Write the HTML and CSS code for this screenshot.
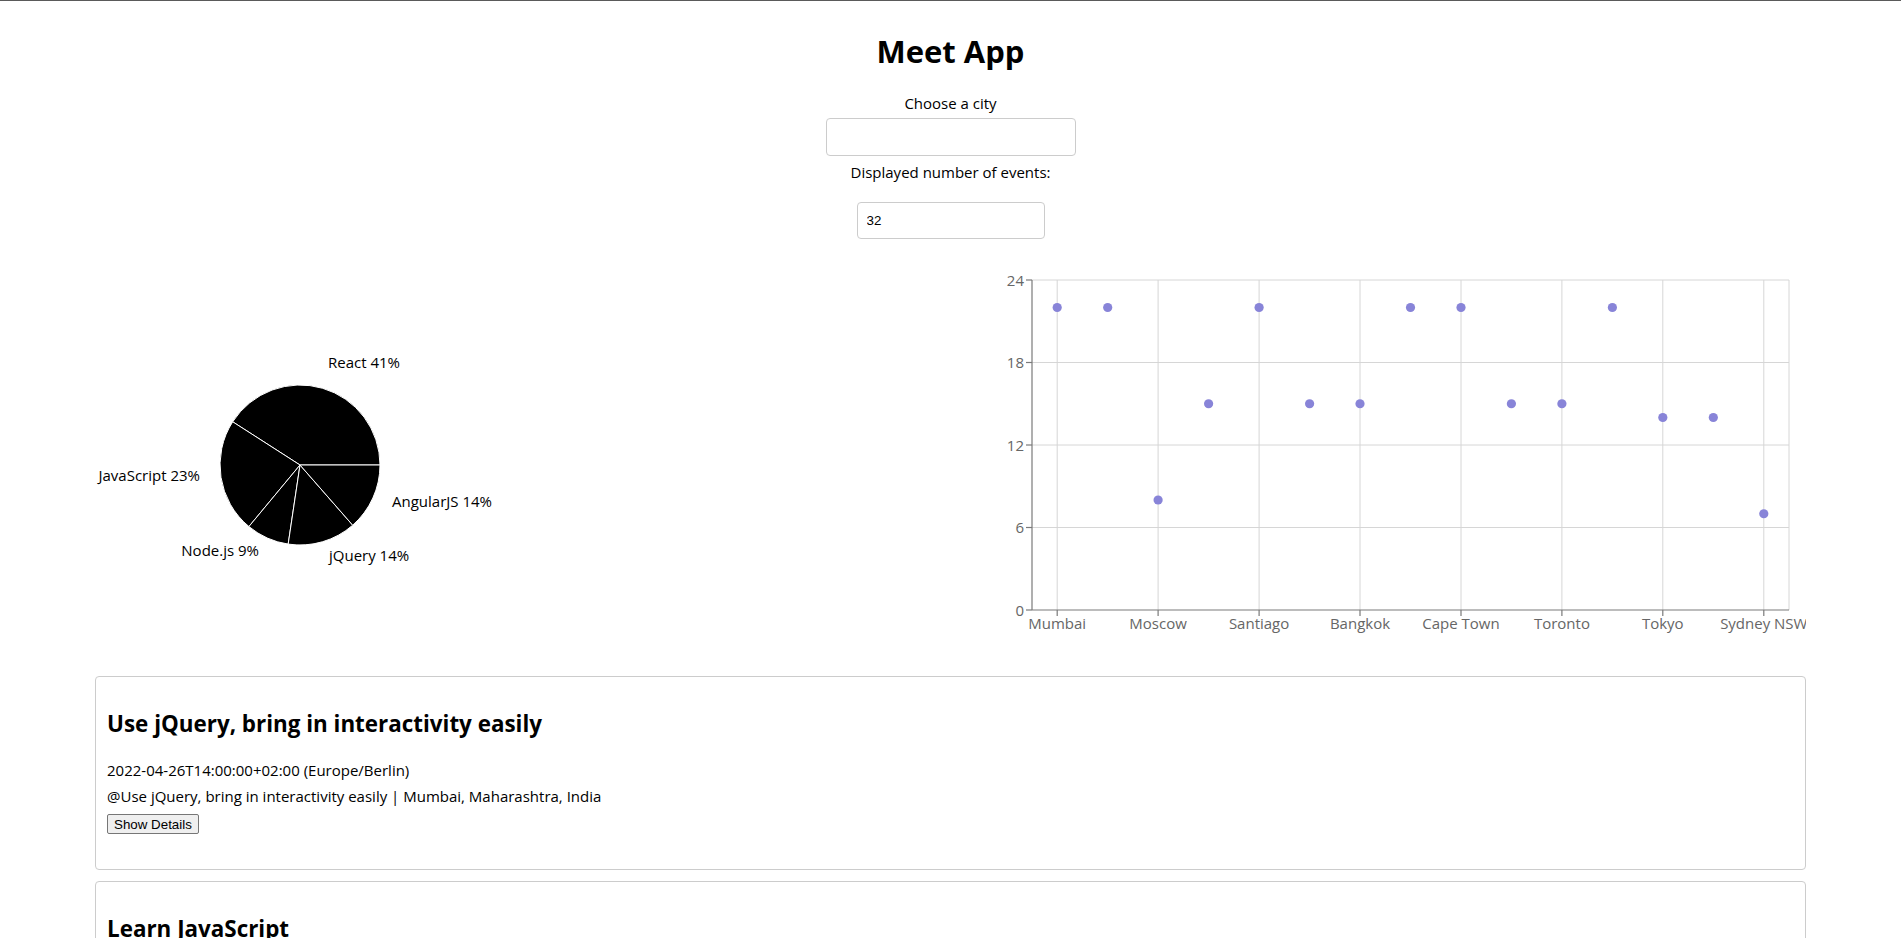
FILE: index.html
```html
<!DOCTYPE html>
<html lang="en">
<head>
<meta charset="utf-8">
<title>Meet App</title>
<link rel="stylesheet" href="styles.css">
</head>
<body>
<div class="app">
  <h1 class="app-title">Meet App</h1>
  <div class="city-search">
    <label class="field-label" for="city">Choose a city</label>
    <input id="city" class="city-input" type="text">
  </div>
  <div class="number-of-events">
    <label class="field-label" for="num">Displayed number of events:</label>
    <input id="num" class="num-input" type="text" value="32">
  </div>

  <div class="charts">
    <svg class="pie-chart" width="856" height="400" viewBox="0 0 856 400">
      <g class="wedges">
        <path d="M205 205 L285 205 A80 80 0 0 0 137.68 161.78 Z"/>
        <path d="M205 205 L137.68 161.78 A80 80 0 0 0 153.90 266.55 Z"/>
        <path d="M205 205 L153.90 266.55 A80 80 0 0 0 193.18 284.12 Z"/>
        <path d="M205 205 L193.18 284.12 A80 80 0 0 0 257.70 265.19 Z"/>
        <path d="M205 205 L257.70 265.19 A80 80 0 0 0 285 205 Z"/>
      </g>
      <g class="pie-labels">
        <text x="233" y="108" text-anchor="start">React 41%</text>
        <text x="105" y="221" text-anchor="end">JavaScript 23%</text>
        <text x="164" y="296" text-anchor="end">Node.js 9%</text>
        <text x="234" y="301" text-anchor="start">jQuery 14%</text>
        <text x="297" y="247" text-anchor="start">AngularJS 14%</text>
      </g>
    </svg>

    <svg class="scatter-chart" width="855" height="400" viewBox="0 0 855 400">
      <g class="grid">
        <line x1="81" y1="20" x2="838" y2="20"/>
        <line x1="81" y1="102.5" x2="838" y2="102.5"/>
        <line x1="81" y1="185" x2="838" y2="185"/>
        <line x1="81" y1="267.5" x2="838" y2="267.5"/>
        <line x1="106.2" y1="20" x2="106.2" y2="350"/>
        <line x1="207.1" y1="20" x2="207.1" y2="350"/>
        <line x1="308.1" y1="20" x2="308.1" y2="350"/>
        <line x1="409" y1="20" x2="409" y2="350"/>
        <line x1="510" y1="20" x2="510" y2="350"/>
        <line x1="610.9" y1="20" x2="610.9" y2="350"/>
        <line x1="711.8" y1="20" x2="711.8" y2="350"/>
        <line x1="812.8" y1="20" x2="812.8" y2="350"/>
        <line x1="838" y1="20" x2="838" y2="350"/>
      </g>
      <g class="axis">
        <line x1="81" y1="20" x2="81" y2="350"/>
        <line x1="81" y1="350" x2="838" y2="350"/>
        <line x1="75" y1="20" x2="81" y2="20"/>
        <line x1="75" y1="102.5" x2="81" y2="102.5"/>
        <line x1="75" y1="185" x2="81" y2="185"/>
        <line x1="75" y1="267.5" x2="81" y2="267.5"/>
        <line x1="75" y1="350" x2="81" y2="350"/>
        <line x1="106.2" y1="350" x2="106.2" y2="356"/>
        <line x1="207.1" y1="350" x2="207.1" y2="356"/>
        <line x1="308.1" y1="350" x2="308.1" y2="356"/>
        <line x1="409" y1="350" x2="409" y2="356"/>
        <line x1="510" y1="350" x2="510" y2="356"/>
        <line x1="610.9" y1="350" x2="610.9" y2="356"/>
        <line x1="711.8" y1="350" x2="711.8" y2="356"/>
        <line x1="812.8" y1="350" x2="812.8" y2="356"/>
      </g>
      <g class="axis-labels y-labels">
        <text x="73" y="25.5">24</text>
        <text x="73" y="108">18</text>
        <text x="73" y="190.5">12</text>
        <text x="73" y="273">6</text>
        <text x="73" y="355.5">0</text>
      </g>
      <g class="axis-labels x-labels">
        <text x="106.2" y="369">Mumbai</text>
        <text x="207.1" y="369">Moscow</text>
        <text x="308.1" y="369">Santiago</text>
        <text x="409" y="369">Bangkok</text>
        <text x="510" y="369">Cape Town</text>
        <text x="610.9" y="369">Toronto</text>
        <text x="711.8" y="369">Tokyo</text>
        <text x="812.8" y="369">Sydney NSW</text>
      </g>
      <g class="dots">
        <circle cx="106.2" cy="47.5" r="4.6"/>
        <circle cx="156.7" cy="47.5" r="4.6"/>
        <circle cx="207.1" cy="240" r="4.6"/>
        <circle cx="257.6" cy="143.75" r="4.6"/>
        <circle cx="308.1" cy="47.5" r="4.6"/>
        <circle cx="358.6" cy="143.75" r="4.6"/>
        <circle cx="409" cy="143.75" r="4.6"/>
        <circle cx="459.5" cy="47.5" r="4.6"/>
        <circle cx="510" cy="47.5" r="4.6"/>
        <circle cx="560.4" cy="143.75" r="4.6"/>
        <circle cx="610.9" cy="143.75" r="4.6"/>
        <circle cx="661.4" cy="47.5" r="4.6"/>
        <circle cx="711.8" cy="157.5" r="4.6"/>
        <circle cx="762.3" cy="157.5" r="4.6"/>
        <circle cx="812.8" cy="253.75" r="4.6"/>
      </g>
    </svg>
  </div>

  <ul class="event-list">
    <li class="event">
      <h2 class="event-title">Use jQuery, bring in interactivity easily</h2>
      <p class="event-line">2022-04-26T14:00:00+02:00 (Europe/Berlin)</p>
      <p class="event-line">@Use jQuery, bring in interactivity easily | Mumbai, Maharashtra, India</p>
      <button class="details-btn">Show Details</button>
    </li>
    <li class="event">
      <h2 class="event-title">Learn JavaScript</h2>
      <p class="event-line">2022-04-27T14:00:00+02:00 (Europe/Berlin)</p>
      <p class="event-line">@Learn JavaScript | London, UK</p>
      <button class="details-btn">Show Details</button>
    </li>
  </ul>
</div>
</body>
</html>
```

FILE: styles.css
```css
html, body {
  margin: 0;
  padding: 0;
  background: #fff;
}

body {
  font-family: "Open Sans", "Noto Sans", sans-serif;
  font-size: 15px;
  color: #000;
}

.app {
  border-top: 1px solid #5a5a5a;
  text-align: center;
}

.app-title {
  font-size: 31px;
  line-height: 40px;
  font-weight: 700;
  margin: 30px 0 0;
}

.city-search,
.number-of-events {
  display: flex;
  flex-direction: column;
  align-items: center;
}

.field-label {
  display: block;
  line-height: 20px;
}

.city-search .field-label {
  margin-top: 22px;
}

.city-input {
  box-sizing: border-box;
  width: 250px;
  height: 38px;
  margin-top: 5px;
  border: 1px solid #ccc;
  border-radius: 4px;
  padding: 0 9px;
  font-family: "Liberation Sans", Arial, sans-serif;
  font-size: 13.33px;
}

.number-of-events .field-label {
  margin-top: 6px;
}

.num-input {
  box-sizing: border-box;
  width: 188px;
  height: 37px;
  margin-top: 20px;
  border: 1px solid #ccc;
  border-radius: 4px;
  padding: 0 9px;
  font-family: "Liberation Sans", Arial, sans-serif;
  font-size: 13.33px;
  color: #000;
}

.charts {
  width: 90%;
  margin: 21px auto 0;
  display: flex;
  text-align: left;
}

.charts svg {
  display: block;
  flex: none;
}

.wedges path {
  fill: #000;
  stroke: #fff;
  stroke-width: 1;
}

.pie-labels text {
  font-family: "Open Sans", sans-serif;
  font-size: 15px;
  fill: #000;
}

.grid line {
  stroke: #d6d6d6;
  stroke-width: 1;
}

.axis line {
  stroke: #7a7a7a;
  stroke-width: 1.2;
}

.axis-labels text {
  font-family: "Open Sans", sans-serif;
  font-size: 15px;
  fill: #666;
}

.y-labels text {
  text-anchor: end;
}

.x-labels text {
  text-anchor: middle;
}

.dots circle {
  fill: #8884d8;
}

.event-list {
  list-style: none;
  margin: 16px 0 0;
  padding: 0;
  text-align: left;
}

.event {
  box-sizing: border-box;
  width: 90%;
  margin: 0 auto 11px;
  padding: 10px 11px;
  border: 1px solid #ccc;
  border-radius: 4px;
}

.event-title {
  font-size: 22.4px;
  line-height: 32px;
  font-weight: 700;
  margin: 21px 0 20px;
}

.event-line {
  margin: 0 0 5px;
  line-height: 21px;
}

.details-btn {
  display: block;
  margin: 7px 0 25px;
  height: 20px;
  padding: 0 6px;
  font-family: "Liberation Sans", Arial, sans-serif;
  font-size: 13.33px;
  color: #000;
  background: #efefef;
  border: 1px solid #767676;
  border-radius: 2px;
}
```
